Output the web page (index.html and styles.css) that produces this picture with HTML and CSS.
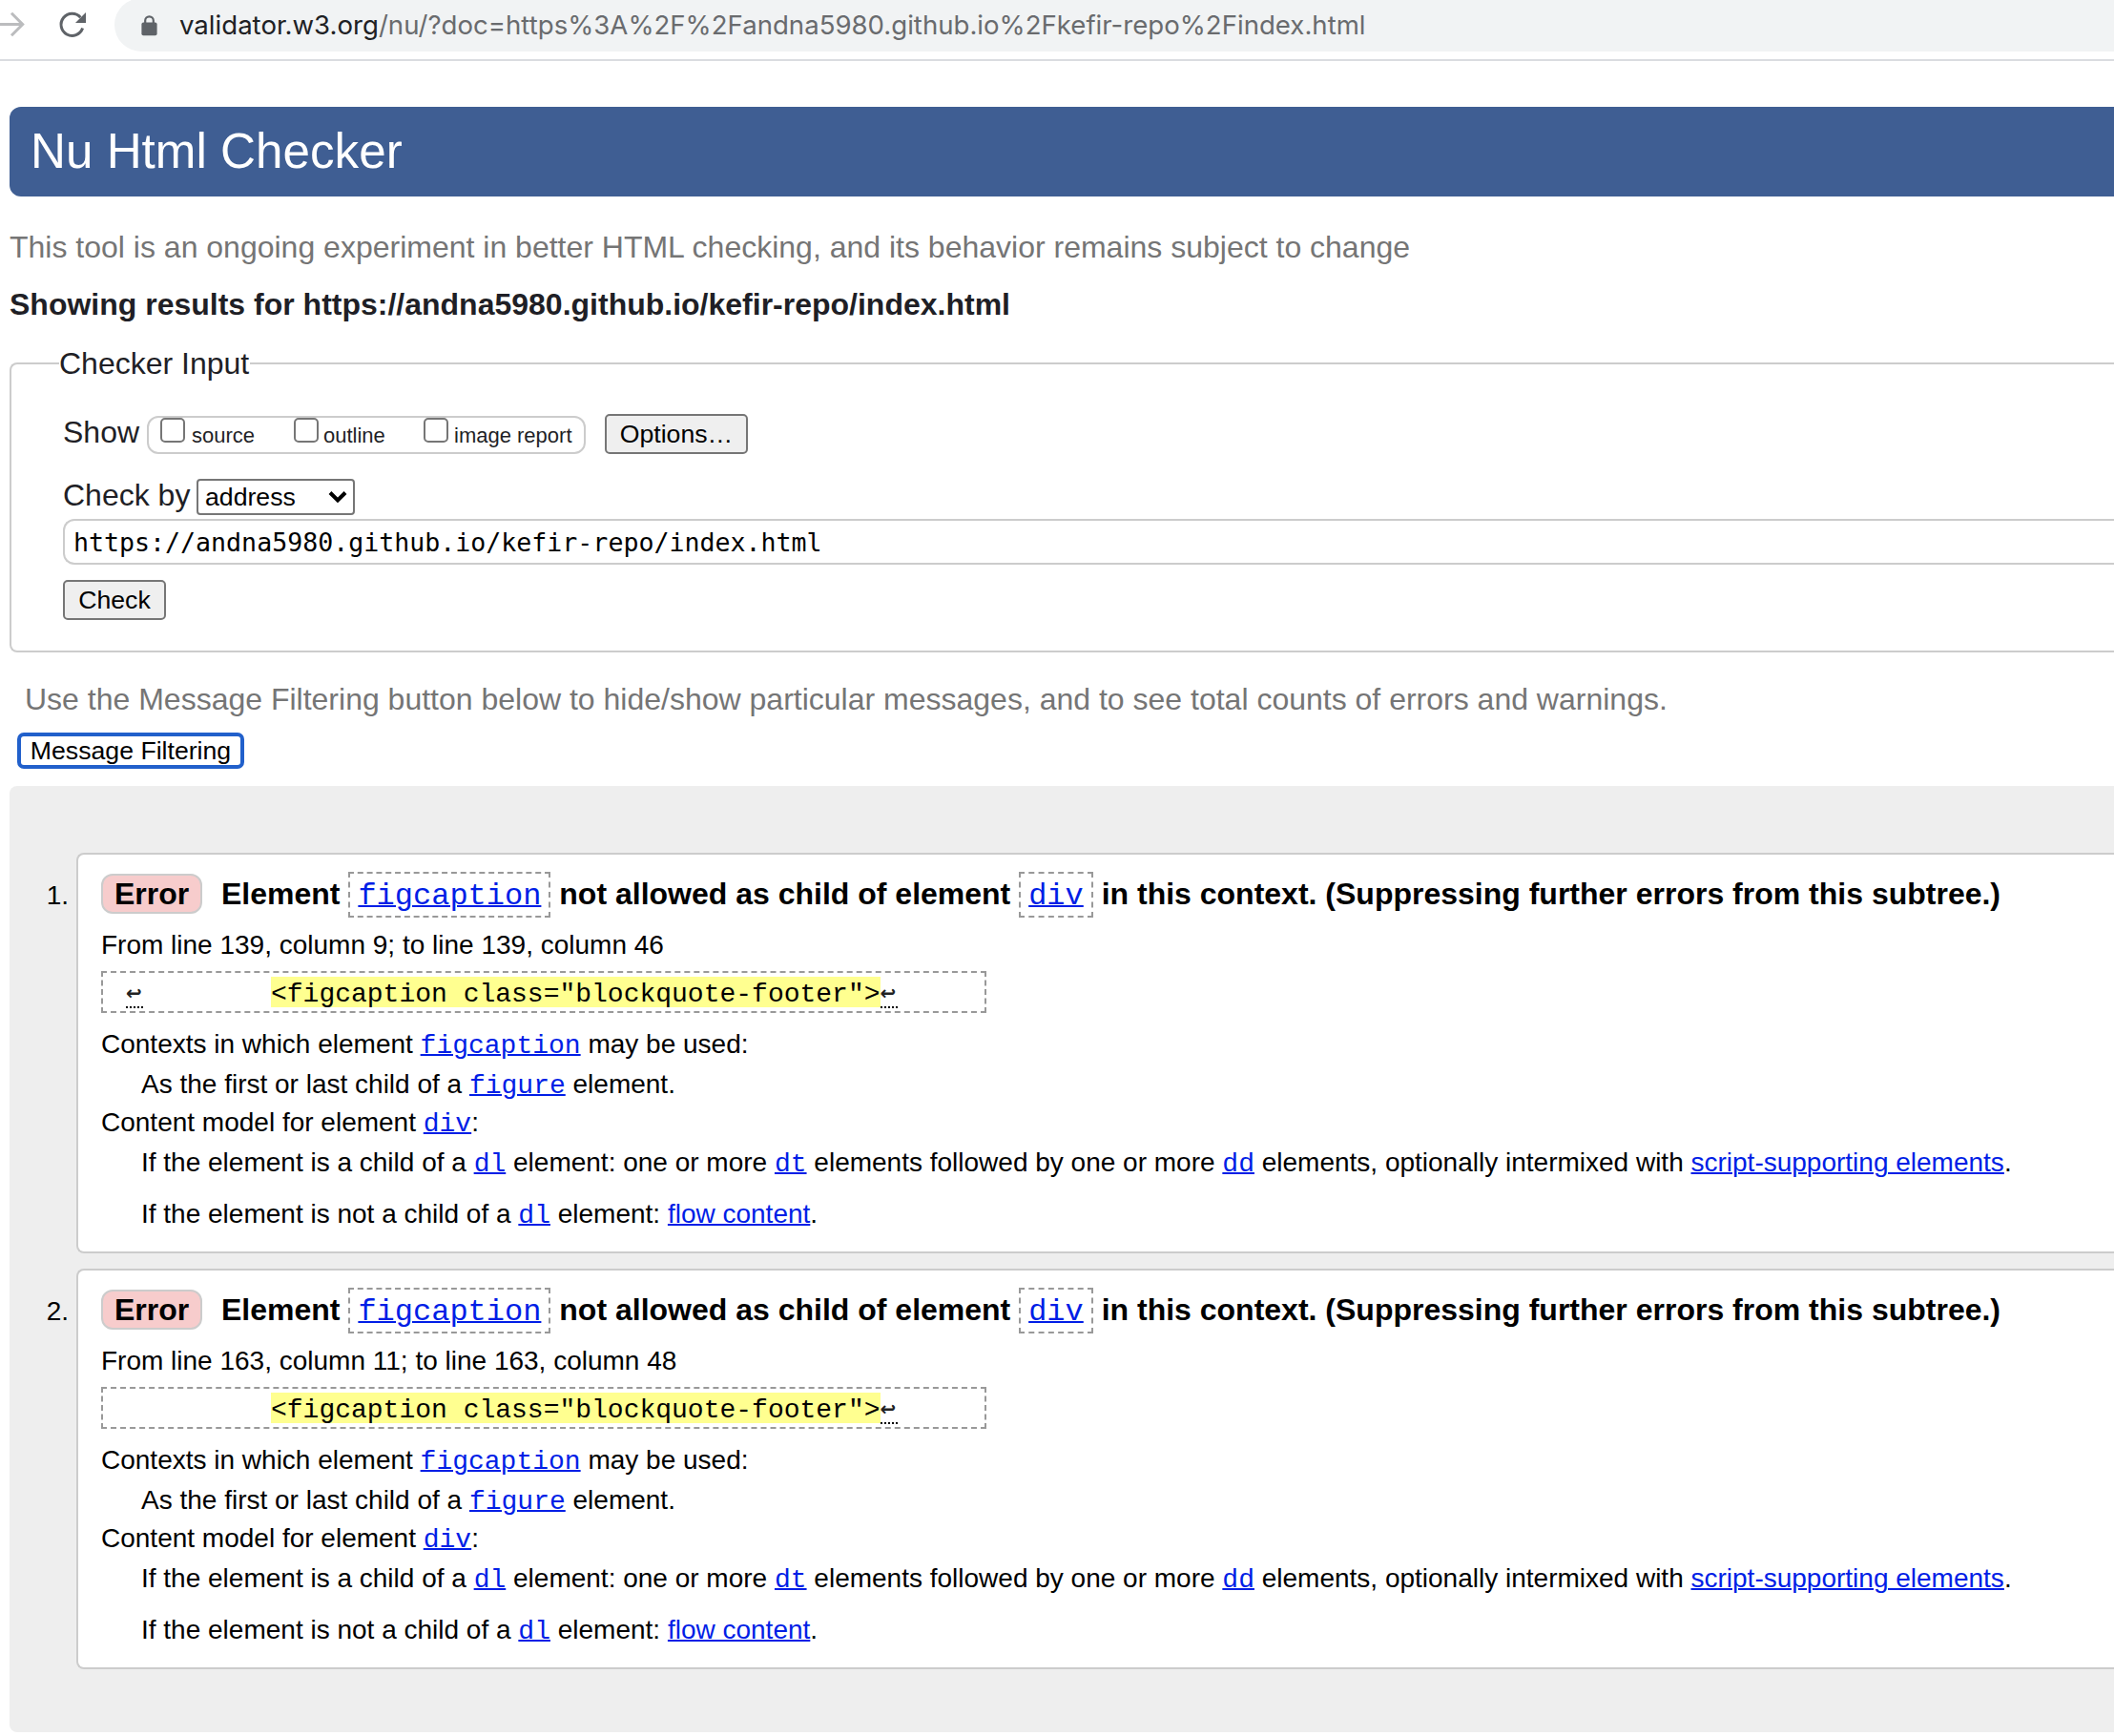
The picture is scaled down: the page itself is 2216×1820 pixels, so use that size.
FILE: index.html
```
<!DOCTYPE html>
<html lang="en">
<head>
<meta charset="utf-8">
<title>Nu Html Checker</title>
<link rel="stylesheet" href="styles.css">
</head>
<body>
<div class="toolbar">
  <svg class="nav-icon" width="28" height="30" viewBox="0 0 28 30" fill="none" stroke="#bbbcbe" stroke-width="3"><path d="M0 14.5H23M12 2.8l11.7 11.7L12 26.2"/></svg>
  <svg class="nav-icon reload" width="30" height="30" viewBox="0 0 30 30"><path d="M25.6 18.6A11.6 11.6 0 1 1 23.4 7.2" fill="none" stroke="#5f6368" stroke-width="3"/><path d="M29 2v11H18z" fill="#5f6368"/></svg>
  <div class="omnibox">
    <svg class="lock" width="17" height="22" viewBox="0 0 17 22"><path d="M4.2 9V5.6a4.3 4.3 0 0 1 8.6 0V9" fill="none" stroke="#5f6368" stroke-width="2.2"/><rect x="0.4" y="7.6" width="16.2" height="13.6" rx="2" fill="#5f6368"/></svg>
    <span class="url"><span class="host">validator.w3.org</span>/nu/?doc=https%3A%2F%2Fandna5980.github.io%2Fkefir-repo%2Findex.html</span>
  </div>
</div>
<main class="page">
  <h1 class="banner">Nu Html Checker</h1>
  <p class="tagline">This tool is an ongoing experiment in better HTML checking, and its behavior remains subject to change</p>
  <h2 class="showing">Showing results for https://andna5980.github.io/kefir-repo/index.html</h2>
  <fieldset class="checker">
    <legend class="legend">Checker Input</legend>
    <div class="row show-row">
      <span class="label">Show</span>
      <div class="show-box">
        <label class="opt source"><input type="checkbox" class="check">source</label>
        <label class="opt outline"><input type="checkbox" class="check">outline</label>
        <label class="opt report"><input type="checkbox" class="check">image report</label>
      </div>
      <button class="btn options">Options…</button>
    </div>
    <div class="row by-row">
      <span class="label">Check by</span>
      <div class="select"><span>address</span><svg width="20" height="14" viewBox="0 0 20 14" fill="none" stroke="#000" stroke-width="4"><path d="M2 2.5l8 8 8-8"/></svg></div>
    </div>
    <div class="address">https://andna5980.github.io/kefir-repo/index.html</div>
    <button class="btn submit">Check</button>
  </fieldset>
  <p class="hint">Use the Message Filtering button below to hide/show particular messages, and to see total counts of errors and warnings.</p>
  <button class="filtering">Message Filtering</button>
  <div class="results">
    <div class="item">
      <span class="number">1.</span>
      <section class="card">
        <div class="title"><span class="badge">Error</span><span class="text">Element <span class="chip"><a>figcaption</a></span> not allowed as child of element <span class="chip"><a>div</a></span> in this context. (Suppressing further errors from this subtree.)</span></div>
        <p class="line where">From line 139, column 9; to line 139, column 46</p>
        <div class="extract"><span class="lead"><span class="newline">↩</span></span><mark class="hit">&lt;figcaption class="blockquote-footer"&gt;</mark><span class="newline">↩</span></div>
        <p class="line contexts">Contexts in which element <a class="code">figcaption</a> may be used:</p>
        <p class="line sub first">As the first or last child of a <a class="code">figure</a> element.</p>
        <p class="line model">Content model for element <a class="code">div</a>:</p>
        <p class="line sub child">If the element is a child of a <a class="code">dl</a> element: one or more <a class="code">dt</a> elements followed by one or more <a class="code">dd</a> elements, optionally intermixed with <a>script-supporting elements</a>.</p>
        <p class="line sub notchild">If the element is not a child of a <a class="code">dl</a> element: <a>flow content</a>.</p>
      </section>
    </div>
    <div class="item">
      <span class="number">2.</span>
      <section class="card">
        <div class="title"><span class="badge">Error</span><span class="text">Element <span class="chip"><a>figcaption</a></span> not allowed as child of element <span class="chip"><a>div</a></span> in this context. (Suppressing further errors from this subtree.)</span></div>
        <p class="line where">From line 163, column 11; to line 163, column 48</p>
        <div class="extract"><span class="lead"></span><mark class="hit">&lt;figcaption class="blockquote-footer"&gt;</mark><span class="newline">↩</span></div>
        <p class="line contexts">Contexts in which element <a class="code">figcaption</a> may be used:</p>
        <p class="line sub first">As the first or last child of a <a class="code">figure</a> element.</p>
        <p class="line model">Content model for element <a class="code">div</a>:</p>
        <p class="line sub child">If the element is a child of a <a class="code">dl</a> element: one or more <a class="code">dt</a> elements followed by one or more <a class="code">dd</a> elements, optionally intermixed with <a>script-supporting elements</a>.</p>
        <p class="line sub notchild">If the element is not a child of a <a class="code">dl</a> element: <a>flow content</a>.</p>
      </section>
    </div>
  </div>
</main>
</body>
</html>
```

FILE: styles.css
```
* { box-sizing: border-box; margin: 0; }
html { overflow: hidden; }
body {
  height: 1820px;
  overflow: hidden;
  background: #fff;
  color: #1f1f26;
  font: 32px/40px "Liberation Sans", Arial, sans-serif;
  white-space: nowrap;
}
button { padding: 0; font: inherit; color: #000; }

/* browser toolbar */
.toolbar {
  display: flex;
  height: 64px;
  border-bottom: 2px solid #dadce0;
}
.nav-icon { flex: none; margin-top: 11px; }
.reload { margin-left: 33px; }
.omnibox {
  display: flex;
  flex: 1;
  height: 56px;
  margin: -2px 0 0 29px;
  padding-left: 28px;
  border-radius: 28px 0 0 28px;
  background: #f1f3f4;
}
.lock { flex: none; margin-top: 18px; }
.url {
  margin: 8px 0 0 23px;
  font-family: Inter, sans-serif;
  font-size: 27.6px;
  color: #696b6e;
}
.host { color: #202124; }

/* page header */
.page { padding: 48px 0 0 10px; }
.banner {
  height: 94px;
  padding-left: 22px;
  border-radius: 12px 0 0 12px;
  background: #3f5e93;
  color: #fff;
  font-size: 51.2px;
  font-weight: normal;
  line-height: 94px;
}
.tagline { margin-top: 33px; color: #757575; }
.showing { margin-top: 20px; font-size: 32px; }

/* input form */
.checker {
  position: relative;
  height: 304px;
  margin-top: 41px;
  padding: 53px 0 0 54px;
  border: 2px solid #ccc;
  border-right: 0;
  border-radius: 8px 0 0 8px;
}
.legend {
  position: absolute;
  top: -21px;
  left: 50px;
  padding: 0 1px 0 0;
  background: #fff;
}
.row { display: flex; }
.label { width: 88px; }
.show-row { height: 42px; margin-top: -1px; }
.show-row .label { line-height: 38px; }
.show-box {
  display: flex;
  width: 460px;
  height: 40px;
  margin-top: 2px;
  padding-left: 12px;
  border: 2px solid #ccc;
  border-radius: 12px;
  font-size: 22px;
  line-height: 37px;
}
.opt { display: flex; }
.source { width: 140px; }
.outline { width: 136px; }
.check {
  appearance: none;
  width: 26px;
  height: 26px;
  margin-right: 5px;
  border: 2px solid #767676;
  border-radius: 5px;
  background: #fff;
}
.source .check { margin-right: 7px; }
.report .check { margin-right: 6px; }
.btn {
  display: block;
  height: 42px;
  border: 2px solid #767676;
  border-radius: 5px;
  background: #efefef;
  font-size: 26.67px;
  line-height: 38px;
}
.options { width: 150px; margin-left: 20px; }
.by-row { height: 38px; margin-top: 26px; }
.by-row .label { width: 140px; line-height: 34px; }
.select {
  display: flex;
  justify-content: space-between;
  align-items: center;
  width: 166px;
  padding: 0 6px 0 7px;
  border: 2px solid #767676;
  border-radius: 4px;
  color: #000;
  font-size: 26.67px;
  line-height: 34px;
}
.address {
  height: 48px;
  margin-top: 4px;
  padding-left: 9px;
  border: 2px solid #ccc;
  border-right: 0;
  border-radius: 12px 0 0 12px;
  color: #000;
  font: 26.6px/45px "DejaVu Sans Mono", monospace;
}
.submit { width: 108px; margin-top: 16px; }
.hint { margin: 29px 0 0 16px; color: #757575; }
.filtering {
  display: block;
  width: 238px;
  height: 38px;
  margin: 15px 0 0 8px;
  border: 4px solid #2160cb;
  border-radius: 7px;
  background: #fff;
  font-size: 26.67px;
  line-height: 28px;
}

/* messages */
.results {
  display: flex;
  flex-direction: column;
  gap: 16px;
  height: 992px;
  margin-top: 18px;
  padding-top: 70px;
  border-radius: 8px 0 0 8px;
  background: #eee;
  color: #000;
}
.item { display: flex; }
.number {
  width: 70px;
  padding: 25px 8px 0 0;
  font-size: 28px;
  text-align: right;
}
.card {
  flex: 1;
  height: 420px;
  padding: 18px 0 0 24px;
  border: 2px solid #ccc;
  border-right: 0;
  border-radius: 8px 0 0 8px;
  background: #fff;
}
.title {
  display: flex;
  height: 48px;
  font-weight: bold;
  line-height: 47px;
}
.badge {
  width: 106px;
  height: 42px;
  margin: 2px 20px 0 0;
  border: 2px solid #ccc;
  border-radius: 12px;
  background: #f7cccc;
  line-height: 38px;
  text-align: center;
}
.chip {
  display: inline-block;
  height: 48px;
  padding: 0 8px;
  border: 2px dashed #999;
  font-family: "Liberation Mono", monospace;
  font-weight: normal;
  line-height: 48px;
  vertical-align: top;
}
a { color: #001ee6; text-decoration: underline; text-decoration-thickness: 2px; }
.line { height: 40px; font-size: 28px; }
.code { font-family: "Liberation Mono", monospace; line-height: 0; }
.where { margin-top: 8px; line-height: 42px; }
.extract {
  display: flex;
  align-items: center;
  width: 928px;
  height: 44px;
  margin: 8px 0 12px;
  padding-left: 24px;
  border: 2px dashed #999;
  font: 28px/37px "Liberation Mono", monospace;
}
.lead { width: 152px; }
.hit { height: 32px; background: #ffff90; }
.newline {
  display: block;
  width: 18px;
  height: 32px;
  margin-top: 2px;
  border-bottom: 2px dotted #000;
  color: #222;
  font: bold 20px/32px "DejaVu Sans", sans-serif;
}
.contexts { line-height: 42px; }
.sub { padding-left: 42px; }
.first { margin-top: 3px; }
.child { margin-top: 2px; }
.notchild { margin-top: 14px; }
```
